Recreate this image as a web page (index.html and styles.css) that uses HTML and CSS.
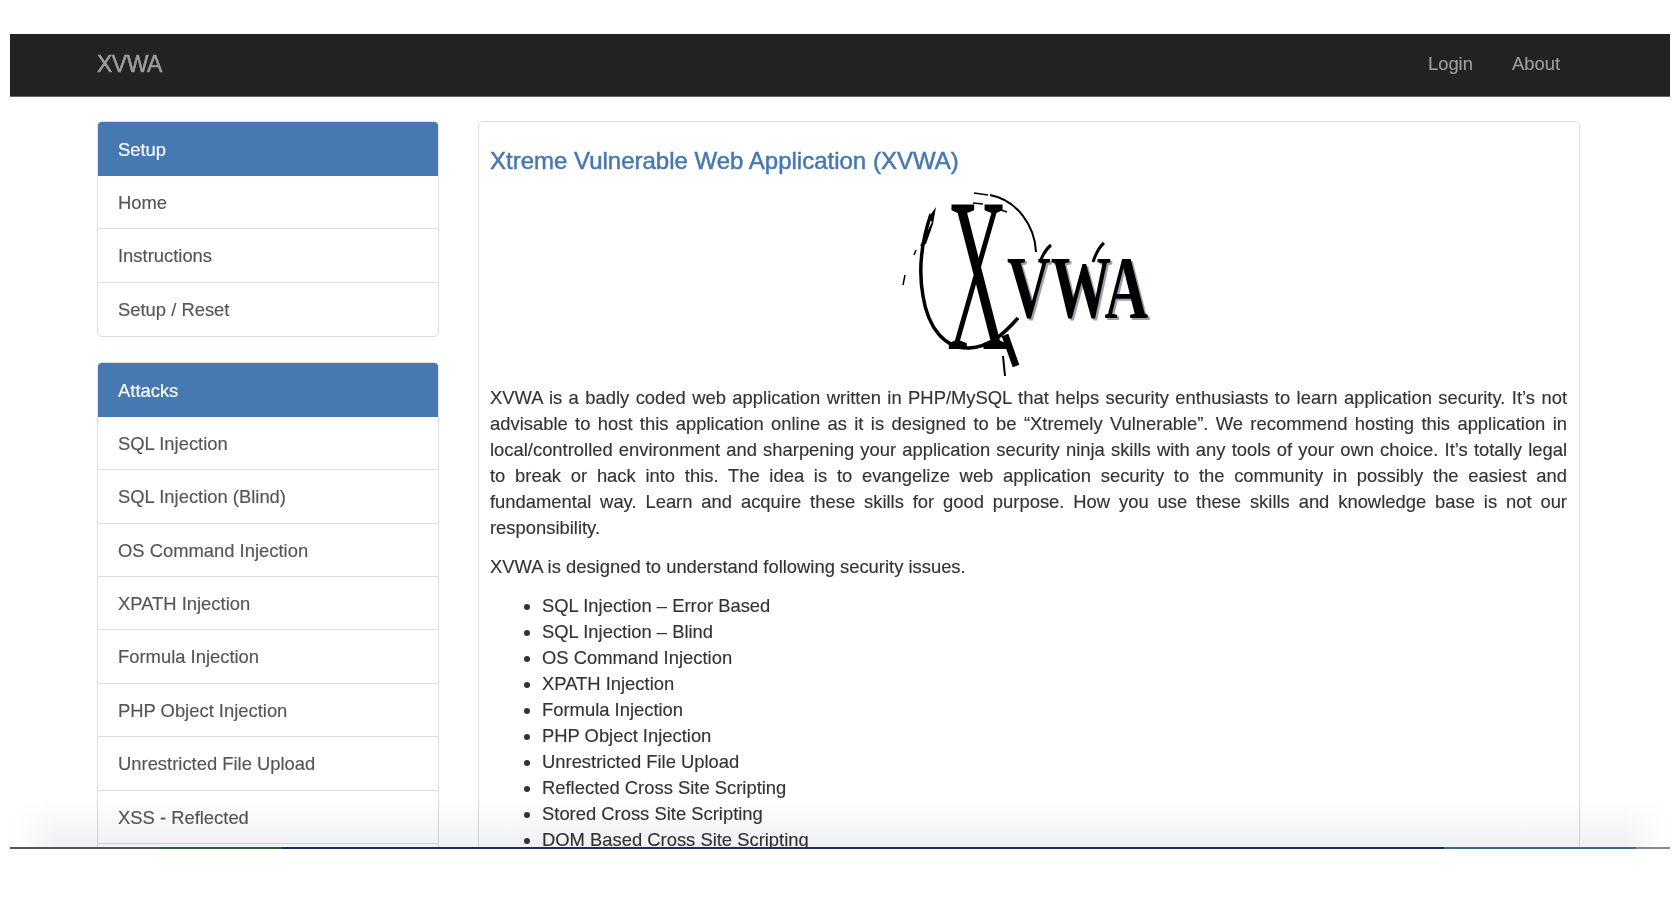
FILE: index.html
```html
<!DOCTYPE html>
<html>
<head>
    <meta charset="utf-8">
    <title>XVWA</title>
    <link rel="stylesheet" href="styles.css">
</head>
<body>
<div class="window">
    <nav class="navbar">
        <a class="brand">XVWA</a>
        <div class="nav-links">
            <a>Login</a>
            <a>About</a>
        </div>
    </nav>
    <div class="main">
        <div class="sidebar">
            <div class="panel">
                <div class="panel-title">Setup</div>
                <a class="panel-item">Home</a>
                <a class="panel-item">Instructions</a>
                <a class="panel-item">Setup / Reset</a>
            </div>
            <div class="panel">
                <div class="panel-title">Attacks</div>
                <a class="panel-item">SQL Injection</a>
                <a class="panel-item">SQL Injection (Blind)</a>
                <a class="panel-item">OS Command Injection</a>
                <a class="panel-item">XPATH Injection</a>
                <a class="panel-item">Formula Injection</a>
                <a class="panel-item">PHP Object Injection</a>
                <a class="panel-item">Unrestricted File Upload</a>
                <a class="panel-item">XSS - Reflected</a>
                <a class="panel-item"></a>
            </div>
        </div>
        <div class="content">
            <h3>Xtreme Vulnerable Web Application (XVWA)</h3>
            <svg class="logo" viewBox="898 195 260 190" width="260" height="190">
                <!-- ring -->
                <path class="ring" d="M930 214 C921 240 917 268 922 296 C927 328 944 349 968 348 C988 347 1002 335 1017 318"/>
                <path class="ring-thin" d="M1035 252 C1034 226 1016 200 989 195"/>
                <path class="dash" d="M987 195 L973 193 M915 250 L913 255 M904 275 L902 285 M972 203 L982 204 M988 206 L1006 212"/>
                <path class="brush" d="M935 207 L927 218 L931 222 L919 246 L925 244 L932 224 Z"/>
                <!-- tail of the big letter -->
                <path class="tail" d="M1004 335 L1015 366"/>
                <path class="tail-thin" d="M1002 356 L1004 376"/>
                <text class="big-x" transform="translate(946 349) scale(1.05 2.75)" x="0" y="0">X</text>
                <!-- flourishes on V and W -->
                <path class="flourish" d="M1039 262 C1042 254 1045 249 1050 245 M1092 262 C1095 253 1098 247 1103 243"/>
                <text class="vwa vwa-shadow" transform="translate(1008 319) scale(0.68 1)" x="0" y="0">VWA</text>
                <text class="vwa" transform="translate(1006 317) scale(0.68 1)" x="0" y="0">VWA</text>
            </svg>
            <p>XVWA is a badly coded web application written in PHP/MySQL that helps security enthusiasts to learn application security. It’s not advisable to host this application online as it is designed to be “Xtremely Vulnerable”. We recommend hosting this application in local/controlled environment and sharpening your application security ninja skills with any tools of your own choice. It’s totally legal to break or hack into this. The idea is to evangelize web application security to the community in possibly the easiest and fundamental way. Learn and acquire these skills for good purpose. How you use these skills and knowledge base is not our responsibility.</p>
            <p class="lead-in">XVWA is designed to understand following security issues.</p>
            <ul>
                <li>SQL Injection – Error Based</li>
                <li>SQL Injection – Blind</li>
                <li>OS Command Injection</li>
                <li>XPATH Injection</li>
                <li>Formula Injection</li>
                <li>PHP Object Injection</li>
                <li>Unrestricted File Upload</li>
                <li>Reflected Cross Site Scripting</li>
                <li>Stored Cross Site Scripting</li>
                <li>DOM Based Cross Site Scripting</li>
            </ul>
        </div>
    </div>
    <div class="fade"></div>
    <div class="edge">
        <span class="edge-gray"></span>
        <span class="edge-green"></span>
        <span class="edge-navy"></span>
        <span class="edge-teal"></span>
        <span class="edge-end"></span>
    </div>
</div>
</body>
</html>
```

FILE: styles.css
```css
* {
    margin: 0;
    padding: 0;
    box-sizing: border-box;
}
html, body {
    height: 100%;
    overflow: hidden;
    background: #fff;
}
body {
    padding: 34px 8px 0 10px;
    font-family: "Liberation Sans", Arial, sans-serif;
    font-size: 18.4px;
    color: #333;
    -webkit-text-stroke: 0.15px;
}
.window {
    position: relative;
    height: 815px;
    overflow: hidden;
}

/* top bar */
.navbar {
    display: flex;
    justify-content: space-between;
    align-items: center;
    height: 63px;
    padding: 0 110px 2px 87px;
    background: #222;
    border-bottom: 1px solid #666;
    color: #9d9d9d;
}
.brand {
    font-size: 23px;
    letter-spacing: -0.5px;
    -webkit-text-stroke: 0.5px;
}
.nav-links {
    display: flex;
    gap: 39px;
}

/* two columns */
.main {
    display: flex;
    gap: 39px;
    padding: 24px 90px 0 87px;
}
.sidebar {
    flex: 0 0 342px;
}
.panel {
    margin-bottom: 24.6px;
    background: #fff;
    border: 1px solid #ddd;
    border-radius: 5px;
    overflow: hidden;
}
.panel-title {
    height: 55px;
    margin: -1px -1px 0;
    padding: 0 21px;
    line-height: 58px;
    color: #fff;
    background: #4678b2;
}
.panel-item {
    display: block;
    height: 53.4px;
    padding: 0 20px;
    line-height: 54px;
    color: #555;
    border-bottom: 1px solid #ddd;
}
.panel-item:last-child {
    border-bottom: 0;
}

.content {
    flex: 1;
    min-width: 0;
    padding: 23px 12px 0 11px;
    background: #fff;
    border: 1px solid #ddd;
    border-radius: 5px;
    line-height: 26px;
}
.content h3 {
    font-size: 24px;
    font-weight: 400;
    line-height: 32px;
    color: #4678b2;
    -webkit-text-stroke: 0.5px;
}
.content p {
    text-align: justify;
    margin-bottom: 13px;
}
.content ul {
    padding-left: 52px;
}

/* logo */
.logo {
    display: block;
    margin: 18px auto 0;
    overflow: visible;
    -webkit-text-stroke: 0;
}
.ring, .ring-thin, .dash, .tail, .tail-thin, .flourish {
    fill: none;
    stroke: #000;
}
.ring { stroke-width: 3.5; }
.ring-thin { stroke-width: 2; }
.dash { stroke-width: 1.5; }
.tail { stroke-width: 7; }
.tail-thin { stroke-width: 2; }
.flourish { stroke-width: 3; }
.brush { fill: #000; }
.big-x {
    font-family: "Liberation Serif", serif;
    font-size: 80px;
    fill: #000;
}
.vwa {
    font-family: "Liberation Serif", serif;
    font-size: 89px;
    font-weight: 700;
    fill: #000;
}
.vwa-shadow {
    fill: #9aa3ad;
}

/* the screenshot's lower edge */
.fade {
    position: absolute;
    left: 0;
    right: 0;
    bottom: 0;
    height: 52px;
    background: linear-gradient(#fff, #eef0f3);
    mix-blend-mode: multiply;
    -webkit-mask-image: linear-gradient(90deg, transparent, #000 45px, #000 calc(100% - 45px), transparent);
    mask-image: linear-gradient(90deg, transparent, #000 45px, #000 calc(100% - 45px), transparent);
}
.edge {
    position: absolute;
    left: 0;
    right: 0;
    bottom: 0;
    display: flex;
    height: 2px;
}
.edge-gray { flex: 0 0 150px; background: #555; }
.edge-green { flex: 0 0 122px; background: #2f5a35; }
.edge-navy { flex: 0 0 1162px; background: #1b2f66; }
.edge-teal { flex: 0 0 192px; background: #3d6c80; }
.edge-end { flex: 1; background: #888; }
```
